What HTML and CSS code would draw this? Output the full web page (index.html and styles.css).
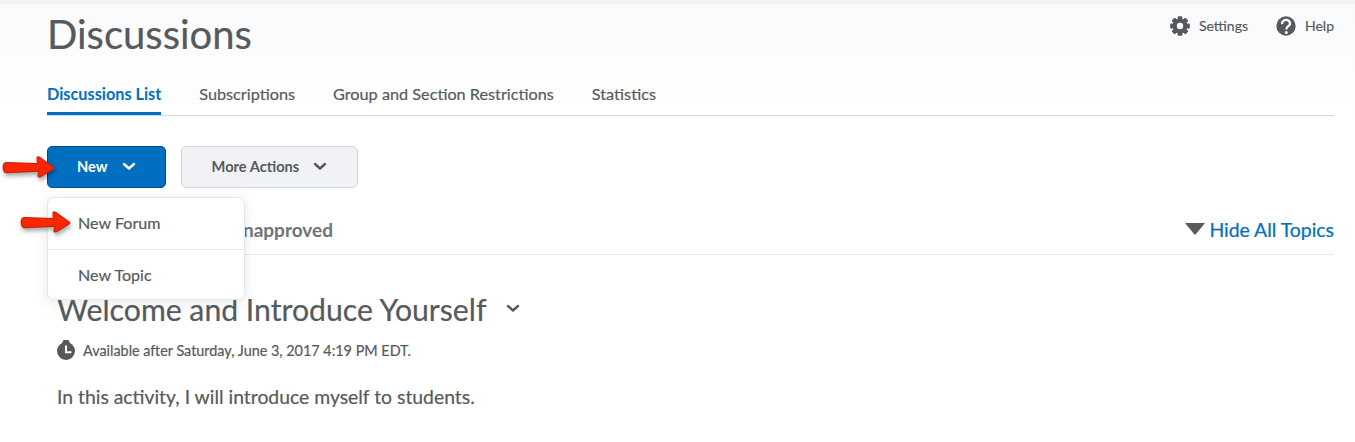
FILE: index.html
```html
<!DOCTYPE html>
<html lang="en">
  <head>
    <meta charset="UTF-8" />
    <meta name="viewport" content="width=device-width, initial-scale=1.0" />
    <title>Discussions</title>
    <link rel="stylesheet" href="styles.css">
  </head>
  <body>
    <div class="page">
      <header class="header">
        <h1>Discussions</h1>
        <div class="tools">
          <a class="tool" href="#">
            <svg width="20" height="20" viewBox="-10 -10 20 20" fill="#565a5c">
              <g id="teeth">
                <rect x="-2.4" y="-9.8" width="4.8" height="19.6" rx="1.2" />
                <rect x="-9.8" y="-2.4" width="19.6" height="4.8" rx="1.2" />
              </g>
              <use href="#teeth" transform="rotate(45)" />
              <circle r="5.3" fill="none" stroke="#565a5c" stroke-width="4.2" />
              <circle r="3.2" fill="#fafbfd" />
            </svg>
            <span>Settings</span>
          </a>
          <a class="tool" href="#">
            <svg width="20" height="20" viewBox="0 0 20 20">
              <circle cx="10" cy="10" r="9.7" fill="#565a5c" />
              <path d="M6 8.2C5.6 2.7 14 2.7 14 7.4C14 10.3 10.3 10.2 10.3 13.6" fill="none" stroke="#fafbfd" stroke-width="2.3" />
              <circle cx="10.3" cy="16.4" r="1.5" fill="#fafbfd" />
            </svg>
            <span>Help</span>
          </a>
        </div>
      </header>

      <nav class="tabs">
        <a class="tab active" href="#">Discussions List</a>
        <a class="tab" href="#">Subscriptions</a>
        <a class="tab" href="#">Group and Section Restrictions</a>
        <a class="tab" href="#">Statistics</a>
      </nav>

      <div class="actions">
        <div class="dropdown">
          <button class="btn btn-primary">
            New
            <svg class="chevron" width="14" height="9" viewBox="0 0 14 9"><path d="M2 2L7 6.5L12 2" /></svg>
          </button>
          <svg class="pointer pointer-new" width="56" height="28" viewBox="0 0 56 28">
            <path d="M4 8.5L35.5 9.7L35 4C35.3 2.7 36.5 2.7 37.5 3.3L51 13C52 13.8 52 14.4 51 15L38.5 22.6C36.8 23.4 35.6 22.7 36 21.2L37 17.2L5 18.7C0.3 18.7 0 8.5 4 8.5Z" />
          </svg>
          <div class="menu">
            <a class="menu-item" href="#">New Forum</a>
            <a class="menu-item" href="#">New Topic</a>
            <svg class="pointer pointer-forum" width="56" height="28" viewBox="0 0 56 28">
              <path d="M4 8.5L33.5 9.7L33 4C33.3 2.7 34.5 2.7 35.5 3.3L49 13C50 13.8 50 14.4 49 15L36.5 22.6C34.8 23.4 33.6 22.7 34 21.2L35 17.2L5 18.7C0.3 18.7 0 8.5 4 8.5Z" />
            </svg>
          </div>
        </div>
        <button class="btn">
          More Actions
          <svg class="chevron" width="14" height="9" viewBox="0 0 14 9"><path d="M2 2L7 6.5L12 2" /></svg>
        </button>
      </div>

      <div class="filter-bar">
        <span class="filter">Unapproved</span>
        <a class="hide-topics" href="#">
          <svg width="20" height="12" viewBox="0 0 20 12"><path d="M0 0H20L11 11Q10 12 9 11Z" fill="#565a5c" /></svg>
          <span>Hide All Topics</span>
        </a>
      </div>

      <section class="forum">
        <div class="forum-title">
          <h2>Welcome and Introduce Yourself</h2>
          <svg class="chevron" width="14" height="9" viewBox="0 0 14 9"><path d="M2 2L7 6.5L12 2" /></svg>
        </div>
        <div class="availability">
          <svg width="18" height="20" viewBox="0 0 18 20">
            <path d="M6.5 0H11.5L13 3H5Z" fill="#565a5c" />
            <circle cx="9" cy="11" r="9" fill="#565a5c" />
            <path d="M9 5.5V12.3H14.5" fill="none" stroke="#fff" stroke-width="2" />
          </svg>
          <span>Available after Saturday, June 3, 2017 4:19 PM EDT.</span>
        </div>
        <p>In this activity, I will introduce myself to students.</p>
      </section>
    </div>
  </body>
</html>
```

FILE: styles.css
```css
* {
  box-sizing: border-box;
}
body {
  margin: 0;
  height: 442px;
  overflow: hidden;
  font-family: Lato, sans-serif;
  color: #565a5c;
  background: linear-gradient(#f9fafc, #fff 120px);
  border-top: 4px solid #f2f3f5;
}
a {
  color: inherit;
  text-decoration: none;
}
h1,
h2,
p {
  margin: 0;
  font-weight: 400;
}
h1,
h2,
p,
.tab,
.tool,
.menu-item,
.availability,
.hide-topics {
  -webkit-text-stroke: 0.2px currentColor;
}
.page {
  padding: 0 21px 0 47px;
}
.header {
  display: flex;
  justify-content: space-between;
  height: 70px;
}
.header h1 {
  font-size: 40px;
  line-height: 61px;
}
.tools {
  display: flex;
  gap: 28px;
  height: 44px;
  align-items: center;
}
.tool {
  display: flex;
  align-items: center;
  gap: 9px;
  font-size: 14px;
}
.tool span {
  margin-bottom: 2px;
}
.tabs {
  display: flex;
  gap: 38px;
  height: 42px;
  border-bottom: 1px solid #d3d9e3;
}
.tab {
  height: 41px;
  line-height: 39px;
  font-size: 16.25px;
}
.tab.active {
  color: #006fbf;
  font-weight: 700;
  border-bottom: 3px solid #006fbf;
  -webkit-text-stroke: 0;
}
.actions {
  display: flex;
  gap: 15px;
  margin-top: 30px;
}
.dropdown {
  position: relative;
}
.btn {
  display: flex;
  align-items: center;
  gap: 14px;
  height: 42px;
  padding: 0 30px 2px;
  border: 1px solid #d3d9e3;
  border-radius: 5px;
  background: #f1f2f5;
  color: #565a5c;
  font: 700 14.65px Lato, sans-serif;
}
.btn-primary {
  padding: 0 29px 2px;
  border-color: #00489b;
  background: #006fbf;
  color: #fff;
}
.chevron path {
  fill: none;
  stroke: currentColor;
  stroke-width: 2.4;
  stroke-linecap: round;
  stroke-linejoin: round;
}
.menu {
  position: absolute;
  z-index: 1;
  top: 51px;
  left: 0;
  width: 198px;
  background: #fff;
  border: 1px solid #e3e9f1;
  border-radius: 7px;
  box-shadow: 0 2px 12px rgba(86, 90, 92, 0.15);
}
.menu-item {
  display: block;
  height: 51px;
  padding-left: 30px;
  font-size: 16.1px;
  line-height: 50px;
}
.menu-item + .menu-item {
  height: 50px;
  border-top: 1px solid #e3e9f1;
}
.pointer {
  position: absolute;
  filter: drop-shadow(1px 3px 2px rgba(0, 0, 0, 0.35));
}
.pointer path {
  fill: #fb2600;
  stroke: #c92308;
  stroke-width: 1.2;
}
.pointer-new {
  top: 8px;
  left: -45px;
}
.pointer-forum {
  top: 11px;
  left: -28px;
}
.filter-bar {
  display: flex;
  justify-content: space-between;
  align-items: center;
  height: 49px;
  margin-top: 18px;
  padding-bottom: 2px;
  border-bottom: 1px solid #e6e8eb;
}
.filter {
  width: 286px;
  text-align: right;
  font-size: 19px;
  font-weight: 700;
  color: #6e7376;
}
.hide-topics {
  display: flex;
  align-items: center;
  gap: 4px;
  font-size: 19.4px;
  color: #006fbf;
}
.forum {
  padding: 33px 0 0 10px;
}
.forum-title {
  display: flex;
  align-items: center;
  gap: 20px;
  height: 42px;
}
.forum-title h2 {
  font-size: 30.2px;
}
.forum-title .chevron {
  margin-bottom: 2px;
}
.availability {
  display: flex;
  align-items: center;
  gap: 8px;
  height: 20px;
  margin-top: 10px;
  font-size: 14.4px;
}
.forum p {
  margin-top: 24px;
  font-size: 19.35px;
  line-height: 26px;
}
```
